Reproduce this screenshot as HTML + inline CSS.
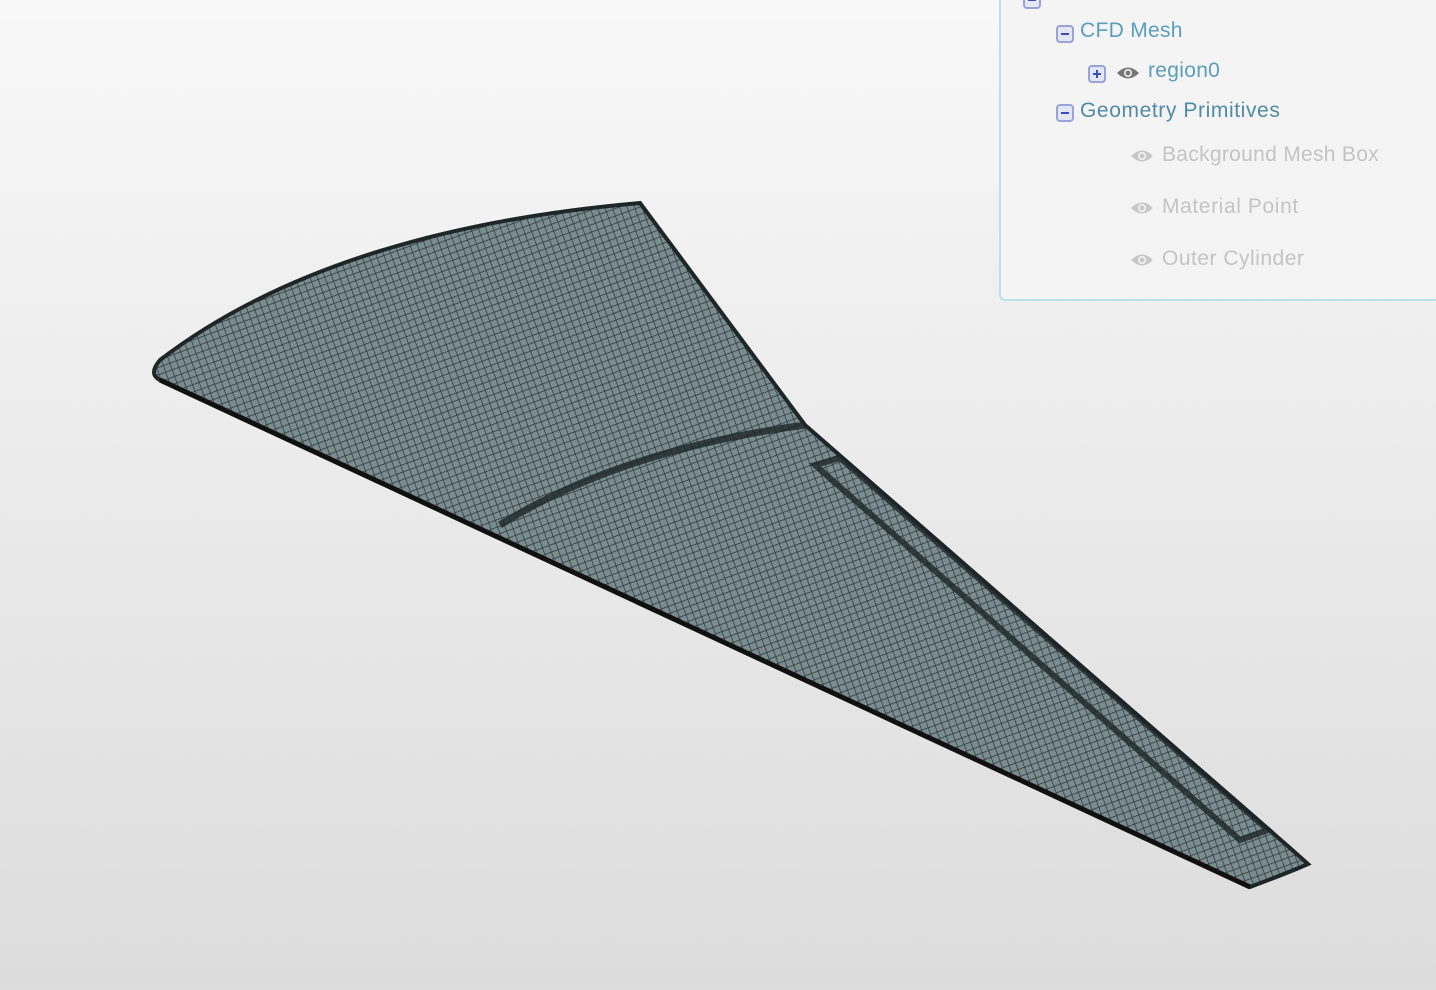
<!DOCTYPE html>
<html><head><meta charset="utf-8"><style>
html,body{margin:0;padding:0}
body{width:1436px;height:990px;overflow:hidden;position:relative;background:linear-gradient(#f8f8f8,#dcdcdc);font-family:"Liberation Sans",sans-serif}
.panel{position:absolute;left:999px;top:-10px;width:450px;height:311px;background:#f4f4f4;border:2px solid #bfdfe8;border-radius:0 0 0 6px;box-sizing:border-box}
.row{position:absolute;font-size:21px;white-space:nowrap;line-height:24px;letter-spacing:0.3px}
.box{position:absolute;width:18px;height:18px;border:2px solid #9aa3d8;border-radius:4px;background:#e4e6f6;box-sizing:border-box}
.box:before{content:"";position:absolute;left:3px;right:3px;top:6px;height:2px;background:#3b4cc0}
.plus:after{content:"";position:absolute;top:3px;bottom:3px;left:6px;width:2px;background:#3b4cc0}
</style></head><body>
<svg width="1436" height="990" style="position:absolute;left:0;top:0">
<defs>
<pattern id="m" width="7" height="7" patternUnits="userSpaceOnUse" patternTransform="rotate(-20)">
<rect width="7" height="7" fill="#7a8c90"/>
<path d="M0 0H7M0 0V7" stroke="#2b3538" stroke-width="1.4"/>
</pattern>
</defs>
<path d="M640 203 Q330 230 160 360 Q148 374 160 380 L1250 887 Q1290 872 1308 864 L1290 848 L805 425 Z" fill="url(#m)" stroke="#1e2628" stroke-width="4"/>
<path d="M805 425 Q620 450 500 525" fill="none" stroke="#1e2628" stroke-width="7" opacity=".8"/>
<path d="M815 465 L840 458 L1268 830 L1240 840 Z" fill="none" stroke="#1e2628" stroke-width="6" opacity=".8"/>
<path d="M160 380 L1250 887" stroke="#111" stroke-width="5"/>
</svg>
<div class="panel"></div>
<div class="box" style="left:1023px;top:-9px"></div>
<div class="box" style="left:1056px;top:25px"></div>
<div class="row" style="left:1080px;top:19px;color:#5a9dbd">CFD Mesh</div>
<div class="box plus" style="left:1088px;top:65px"></div>
<svg style="position:absolute;left:1116px;top:65px" width="24" height="16"><path d="M1 8Q12-3 23 8Q12 19 1 8Z" fill="#777"/><circle cx="12" cy="8" r="4" fill="#f4f4f4"/><circle cx="12" cy="8" r="2.5" fill="#777"/></svg>
<div class="row" style="left:1148px;top:59px;color:#5a9dbd">region0</div>
<div class="box" style="left:1056px;top:104px"></div>
<div class="row" style="left:1080px;top:99px;color:#4f8aa6;letter-spacing:0.6px">Geometry Primitives</div>
<svg style="position:absolute;left:1130px;top:148px" width="24" height="16"><path d="M1 8Q12-3 23 8Q12 19 1 8Z" fill="#c8c8c8"/><circle cx="12" cy="8" r="4" fill="#f4f4f4"/><circle cx="12" cy="8" r="2.5" fill="#c8c8c8"/></svg>
<div class="row" style="left:1162px;top:143px;color:#c4c4c4">Background Mesh Box</div>
<svg style="position:absolute;left:1130px;top:200px" width="24" height="16"><path d="M1 8Q12-3 23 8Q12 19 1 8Z" fill="#c8c8c8"/><circle cx="12" cy="8" r="4" fill="#f4f4f4"/><circle cx="12" cy="8" r="2.5" fill="#c8c8c8"/></svg>
<div class="row" style="left:1162px;top:195px;color:#c4c4c4;letter-spacing:0.6px">Material Point</div>
<svg style="position:absolute;left:1130px;top:252px" width="24" height="16"><path d="M1 8Q12-3 23 8Q12 19 1 8Z" fill="#c8c8c8"/><circle cx="12" cy="8" r="4" fill="#f4f4f4"/><circle cx="12" cy="8" r="2.5" fill="#c8c8c8"/></svg>
<div class="row" style="left:1162px;top:247px;color:#c4c4c4;letter-spacing:0.5px">Outer Cylinder</div>
</body></html>
